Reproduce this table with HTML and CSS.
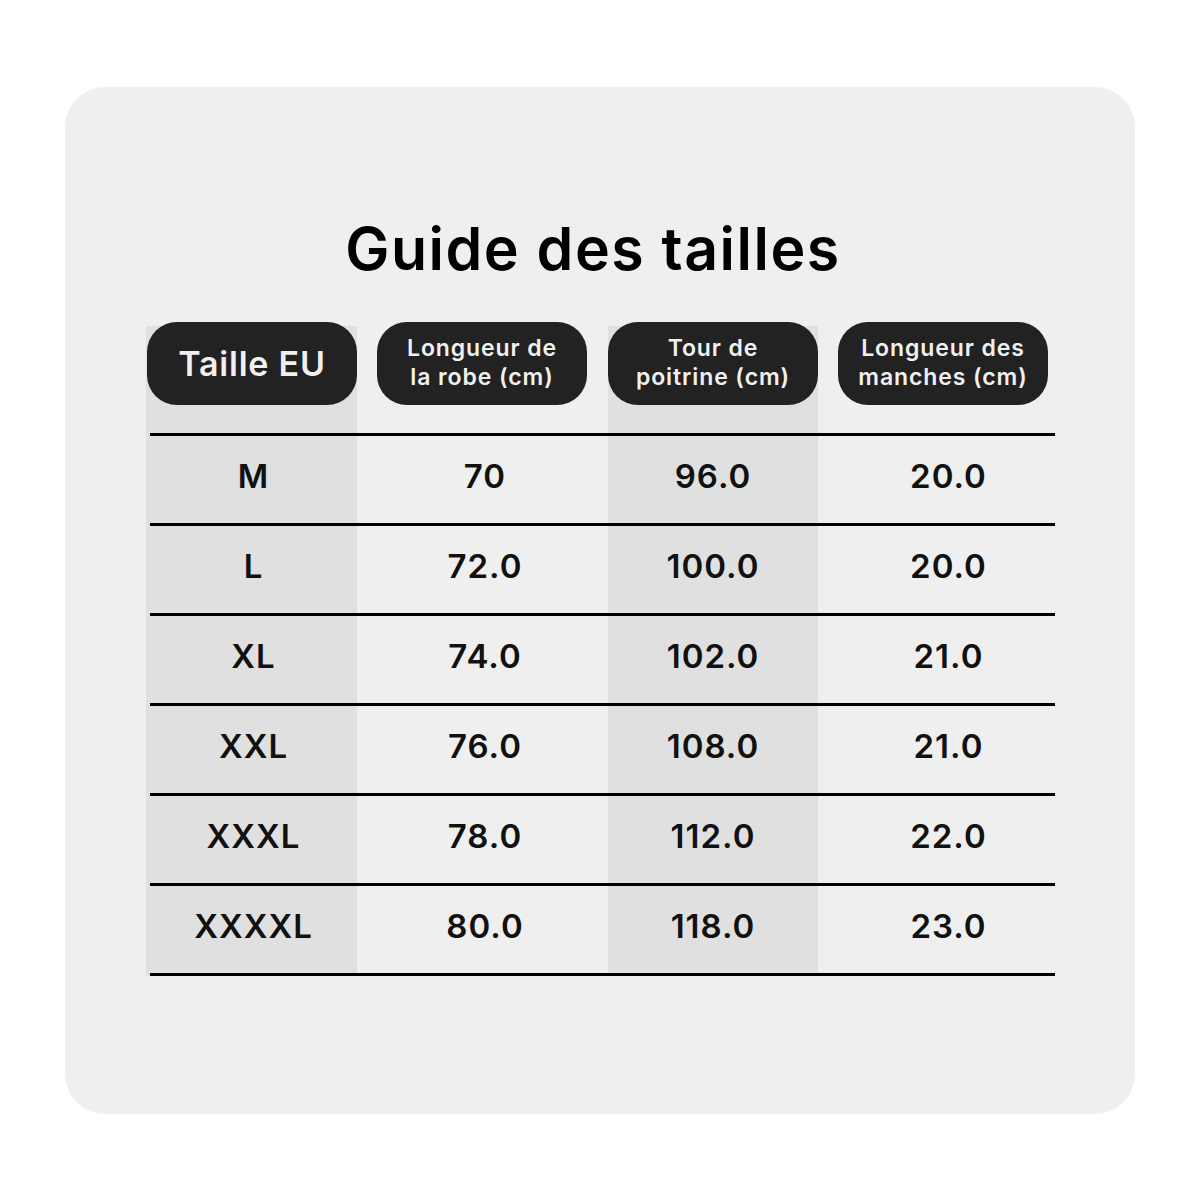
FILE: index.html
```html
<!DOCTYPE html>
<html lang="fr">
<head>
<meta charset="utf-8">
<title>Guide des tailles</title>
<link rel="stylesheet" href="styles.css">
</head>
<body>
  <main class="card">
    <h1 class="title">Guide des tailles</h1>
    <section class="chart">
      <div class="head">
        <div class="pill pill-main">Taille EU</div>
        <div class="pill pill-off">Longueur de<br>la robe (cm)</div>
        <div class="pill">Tour de<br>poitrine (cm)</div>
        <div class="pill pill-off">Longueur des<br>manches (cm)</div>
      </div>
      <div class="body">
        <div class="row"><span class="c1">M</span><span class="c2">70</span><span class="c3">96.0</span><span class="c4">20.0</span></div>
        <div class="row"><span class="c1">L</span><span class="c2">72.0</span><span class="c3">100.0</span><span class="c4">20.0</span></div>
        <div class="row"><span class="c1">XL</span><span class="c2">74.0</span><span class="c3">102.0</span><span class="c4">21.0</span></div>
        <div class="row"><span class="c1">XXL</span><span class="c2">76.0</span><span class="c3">108.0</span><span class="c4">21.0</span></div>
        <div class="row"><span class="c1">XXXL</span><span class="c2">78.0</span><span class="c3">112.0</span><span class="c4">22.0</span></div>
        <div class="row"><span class="c1">XXXXL</span><span class="c2">80.0</span><span class="c3">118.0</span><span class="c4">23.0</span></div>
      </div>
    </section>
  </main>
</body>
</html>
```

FILE: styles.css
```css
* { box-sizing: border-box; }

html, body {
  margin: 0;
  background: #ffffff;
}

body {
  padding: 87px 65px;
  font-family: "Inter", "Open Sans", "Liberation Sans", sans-serif;
  color: #111111;
}

.card {
  width: 1070px;
  height: 1027px;
  background: #efefef;
  border-radius: 40px;
  padding: 126px 0 0 81px;
}

.title {
  margin: 0 0 42px 0;
  width: 908px;
  padding-right: 14px;
  text-align: center;
  font-size: 59px;
  line-height: 71px;
  font-weight: 600;
  letter-spacing: 1.5px;
  color: #000000;
}

.chart {
  display: flex;
  flex-direction: column;
  width: 922px;
  background-image: linear-gradient(90deg,
    #e0e0e0 0, #e0e0e0 211px,
    transparent 211px, transparent 462px,
    #e0e0e0 462px, #e0e0e0 672px,
    transparent 672px);
}

.head {
  display: grid;
  grid-template-columns: 211px 251px 210px 250px;
  margin-top: -4px;
  padding-bottom: 28px;
}

.pill {
  height: 83px;
  width: 210px;
  border-radius: 30px;
  background: #222222;
  color: #f0f0f0;
  display: flex;
  align-items: center;
  justify-content: center;
  text-align: center;
  font-size: 23px;
  line-height: 29px;
  font-weight: 600;
  letter-spacing: 0.9px;
  white-space: nowrap;
  padding-bottom: 2px;
}

.pill-main {
  margin-left: 1px;
  font-size: 34px;
  letter-spacing: 0.8px;
  padding-bottom: 0;
}

.pill-off {
  margin-left: 20px;
}

.body {
  margin: 0 13px 0 4px;
  border-top: 3px solid #000000;
}

.row {
  display: grid;
  grid-template-columns: 207px 251px 210px 237px;
  height: 90px;
  border-bottom: 3px solid #000000;
  align-items: center;
  font-size: 33px;
  font-weight: 600;
  letter-spacing: 1px;
  line-height: 40px;
  padding-bottom: 7px;
}

.row span {
  text-align: center;
}

.c2 { padding-left: 5px; }
.c4 { padding-left: 24px; }
```
